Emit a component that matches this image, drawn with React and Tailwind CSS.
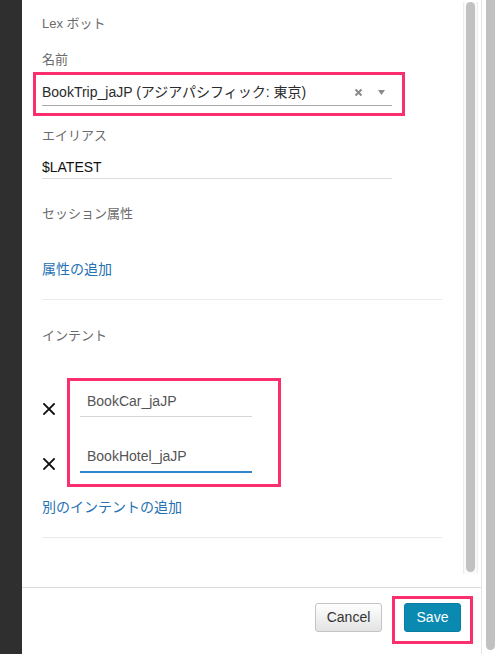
import React from "react";

const FONT = { fontFamily: '"Liberation Sans", "Noto Sans CJK JP", sans-serif' };

// small label above each field
const Label = ({ children, className = "" }) => (
  <div className={`h-[16px] flex items-center text-[13px] text-[#6b6b6b] ${className}`}>
    {children}
  </div>
);

const CloseX = ({ className = "" }) => (
  <svg width="12" height="12" viewBox="0 0 12 12" className={className}>
    <path d="M1 1L11 11M11 1L1 11" stroke="#111" strokeWidth="1.8" strokeLinecap="square" />
  </svg>
);

const Scrollbar = ({ thumbClass }) => (
  <div className="h-full w-[15px] border-l border-r border-[#ececec] bg-[#fafafa] flex justify-center">
    <div className={`w-[9px] rounded-full bg-[#c1c1c1] ${thumbClass}`} />
  </div>
);

export default function App() {
  return (
    <div className="w-[496px] h-[654px] flex bg-white overflow-hidden" style={FONT}>
      {/* dark page behind the modal */}
      <div className="w-[22px] h-full bg-[#2f2f2f]" />

      {/* modal */}
      <div className="w-[460px] h-full flex flex-col border-r border-[#e6e6e6]">
        <div className="h-[588px] flex border-b border-[#dcdcdc]">
          <div className="w-[441px] pl-[20px]">
            <Label className="mt-[16px]">Lex ボット</Label>

            <Label className="mt-[20px]">名前</Label>
            <div className="-ml-[9px] mt-[4px] w-[372px] h-[44px] border-[3px] border-[#fb2f6e]">
              <div className="ml-[6px] mr-[10px] mt-[4px] h-[27px] border-b border-[#a9a9a9] flex items-center">
                <span className="flex-1 text-[14px] text-[#2b2b2b]">
                  BookTrip_jaJP (アジアパシフィック: 東京)
                </span>
                <svg width="9" height="9" viewBox="0 0 9 9" className="mr-[15px]">
                  <path d="M1.5 1.5L7.5 7.5M7.5 1.5L1.5 7.5" stroke="#8a8a8a" strokeWidth="2" />
                </svg>
                <svg width="7" height="5" viewBox="0 0 7 5" className="mr-[7px]">
                  <path d="M0 0H7L3.5 5Z" fill="#8a8a8a" />
                </svg>
              </div>
            </div>

            <Label className="mt-[12px]">エイリアス</Label>
            <div className="mt-[12px] w-[350px] h-[23px] border-b border-[#dcdcdc] flex items-center text-[14px] text-[#111]">
              $LATEST
            </div>

            <Label className="mt-[27px]">セッション属性</Label>
            <div className="mt-[39px] h-[16px] flex items-center text-[14px] text-[#2571b3]">
              属性の追加
            </div>
            <div className="mt-[22px] w-[400px] h-px bg-[#ebebeb]" />

            <Label className="mt-[28px]">インテント</Label>

            <div className="mt-[34px] flex items-start">
              <div className="w-[25px] flex flex-col">
                <CloseX className="ml-[1px] mt-[25px]" />
                <CloseX className="ml-[1px] mt-[43px]" />
              </div>
              <div className="w-[214px] h-[109px] border-[3px] border-[#fb2f6e] pl-[10px] pt-[6px]">
                <div className="w-[172px] h-[30px] border-b border-[#d6d6d6] pl-[7px] flex items-center text-[14px] text-[#555]">
                  BookCar_jaJP
                </div>
                <div className="mt-[25px] w-[172px]">
                  <div className="h-[29px] pl-[7px] flex items-center text-[14px] text-[#555]">
                    BookHotel_jaJP
                  </div>
                  <div className="h-[2px] bg-[#2f86cc]" />
                </div>
              </div>
            </div>

            <div className="mt-[12px] h-[16px] flex items-center text-[14px] text-[#2571b3]">
              別のインテントの追加
            </div>
            <div className="mt-[22px] w-[400px] h-px bg-[#ebebeb]" />
          </div>

          {/* inner scrollbar */}
          <div className="h-[574px] pt-[2px]">
            <Scrollbar thumbClass="h-[570px]" />
          </div>
        </div>

        {/* footer */}
        <div className="flex-1 flex justify-end items-start pt-[8px] pr-[8px]">
          <button className="mt-[7px] w-[67px] h-[29px] rounded-[3px] border border-[#c4c4c4] bg-gradient-to-b from-[#ffffff] to-[#e3e3e3] text-[14px] text-[#333]">
            Cancel
          </button>
          <div className="ml-[10px] w-[81px] h-[48px] border-[3px] border-[#fb2f6e] pl-[9px] pt-[4px]">
            <button className="w-[57px] h-[29px] rounded-[3px] bg-[#0b8ab1] border border-[#0a7ea2] text-[14px] text-white">
              Save
            </button>
          </div>
        </div>
      </div>

      {/* outer scrollbar */}
      <div className="w-[14px] h-full flex justify-end pr-[1px] bg-white">
        <div className="w-[9px] h-[650px] rounded-b-full bg-[#c1c1c1]" />
      </div>
    </div>
  );
}
